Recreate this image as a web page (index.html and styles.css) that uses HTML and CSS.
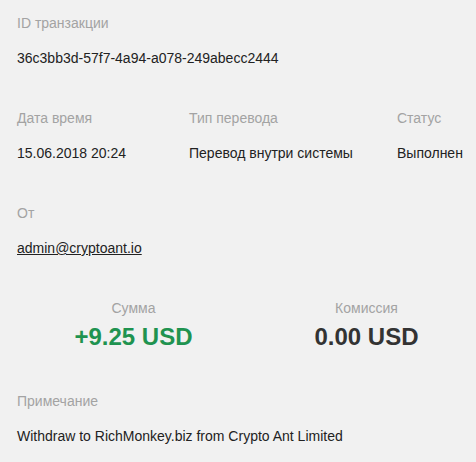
FILE: index.html
```html
<!DOCTYPE html>
<html lang="ru">
<head>
  <meta charset="UTF-8">
  <meta name="viewport" content="width=device-width, initial-scale=1.0">
  <title>Транзакция</title>
  <link rel="stylesheet" href="styles.css">
</head>
<body>
  <div class="details">
    <div class="field">
      <div class="label">ID транзакции</div>
      <div class="value">36c3bb3d-57f7-4a94-a078-249abecc2444</div>
    </div>

    <div class="row">
      <div class="field">
        <div class="label">Дата время</div>
        <div class="value">15.06.2018 20:24</div>
      </div>
      <div class="field">
        <div class="label">Тип перевода</div>
        <div class="value">Перевод внутри системы</div>
      </div>
      <div class="field">
        <div class="label">Статус</div>
        <div class="value">Выполнен</div>
      </div>
    </div>

    <div class="field">
      <div class="label">От</div>
      <div class="value"><a href="#" class="email">admin@cryptoant.io</a></div>
    </div>

    <div class="amounts">
      <div class="amount-box">
        <div class="label">Сумма</div>
        <div class="amount positive">+9.25 USD</div>
      </div>
      <div class="amount-box">
        <div class="label">Комиссия</div>
        <div class="amount">0.00 USD</div>
      </div>
    </div>

    <div class="field last">
      <div class="label">Примечание</div>
      <div class="value">Withdraw to RichMonkey.biz from Crypto Ant Limited</div>
    </div>
  </div>
</body>
</html>
```

FILE: styles.css
```css
body {
  margin: 0;
  background-color: #f1f1f1;
  font-family: "Liberation Sans", Arial, sans-serif;
  font-size: 14px;
  color: #222;
}
.details {
  padding: 13px 0 0 17px;
  white-space: nowrap;
}
.field {
  margin-bottom: 40px;
}
.field.last {
  margin-bottom: 0;
}
.label {
  color: #a3a3a3;
  line-height: 20px;
}
.value {
  line-height: 20px;
  margin-top: 15px;
}
.email {
  color: #222;
  text-decoration: underline;
}
/* Date / type / status */
.row {
  display: grid;
  grid-template-columns: 172px 208px auto;
}
/* Sum and commission */
.amounts {
  display: grid;
  grid-template-columns: 233px 233px;
  margin-bottom: 40px;
}
.amount-box {
  text-align: center;
}
.amount {
  font-size: 24px;
  font-weight: bold;
  line-height: 28px;
  margin-top: 5px;
  color: #333;
}
.amount.positive {
  color: #1f9350;
}
```
